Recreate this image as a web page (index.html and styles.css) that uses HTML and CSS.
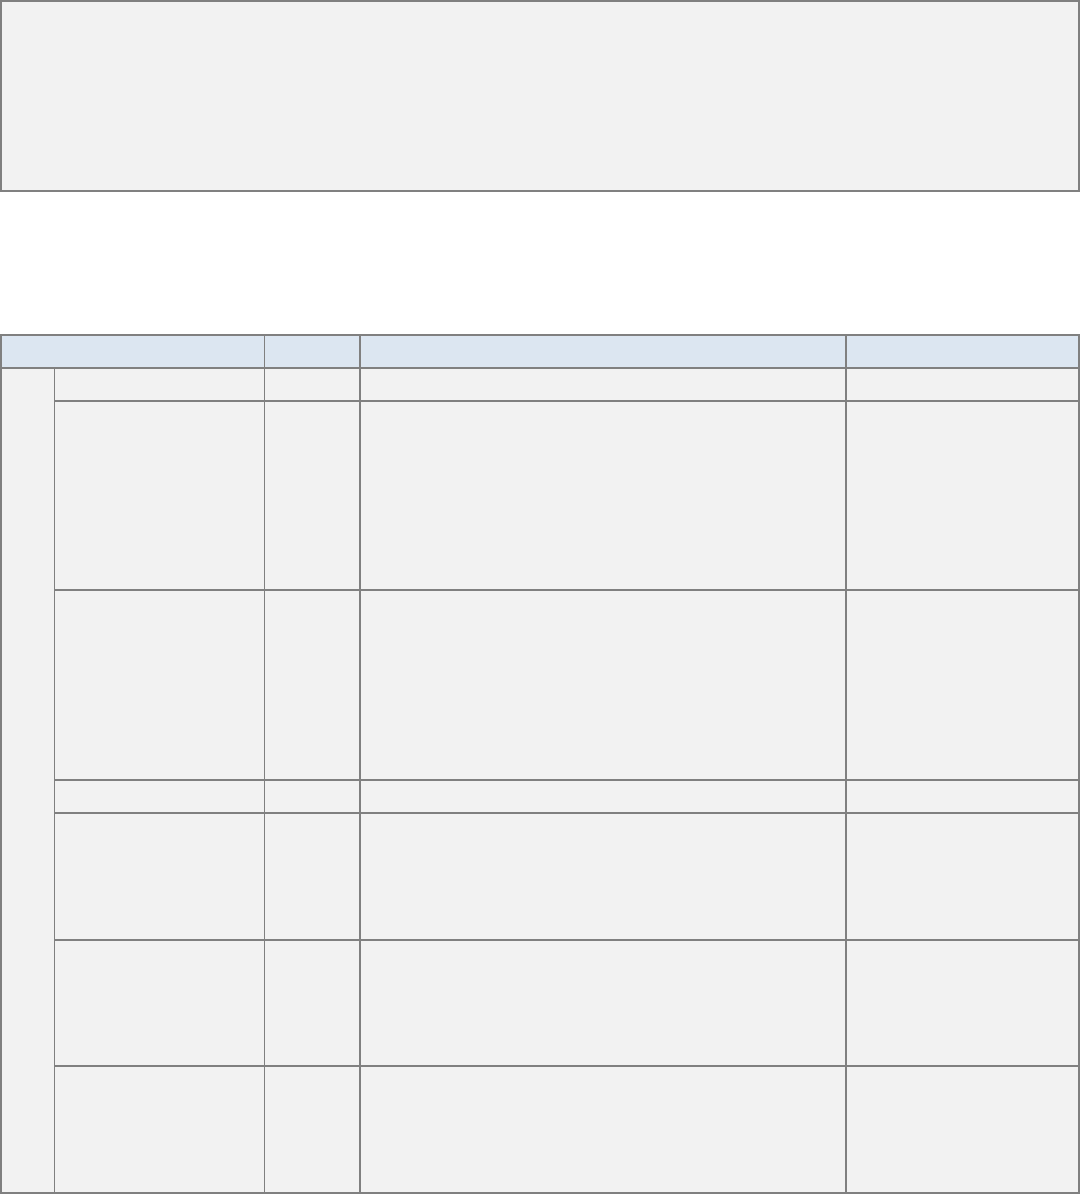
FILE: index.html
```html
<!DOCTYPE html>
<html lang="en">
<head>
<meta charset="utf-8">
<title>Sheet</title>
<link rel="stylesheet" href="styles.css">
</head>
<body>
<div class="page">
  <div class="note-box"></div>
  <div class="sheet">
    <div class="cell head span-ab b-r1 b-b"></div>
    <div class="cell head b-r2 b-b"></div>
    <div class="cell head b-r2 b-b"></div>
    <div class="cell head b-b"></div>

    <div class="cell group b-r1"></div>

    <div class="cell b-r1 b-b"></div><div class="cell b-r2 b-b"></div><div class="cell b-r2 b-b"></div><div class="cell b-b"></div>
    <div class="cell b-r1 b-b"></div><div class="cell b-r2 b-b"></div><div class="cell b-r2 b-b"></div><div class="cell b-b"></div>
    <div class="cell b-r1 b-b"></div><div class="cell b-r2 b-b"></div><div class="cell b-r2 b-b"></div><div class="cell b-b"></div>
    <div class="cell b-r1 b-b"></div><div class="cell b-r2 b-b"></div><div class="cell b-r2 b-b"></div><div class="cell b-b"></div>
    <div class="cell b-r1 b-b"></div><div class="cell b-r2 b-b"></div><div class="cell b-r2 b-b"></div><div class="cell b-b"></div>
    <div class="cell b-r1 b-b"></div><div class="cell b-r2 b-b"></div><div class="cell b-r2 b-b"></div><div class="cell b-b"></div>
    <div class="cell b-r1"></div><div class="cell b-r2"></div><div class="cell b-r2"></div><div class="cell"></div>
  </div>
</div>
</body>
</html>
```
FILE: styles.css
```css
* { box-sizing: border-box; }
html, body {
  margin: 0;
  padding: 0;
  background: #ffffff;
  font-family: "Liberation Sans", Arial, sans-serif;
}
.page {
  width: 1080px;
  display: flex;
  flex-direction: column;
  gap: 142px;
}
.note-box {
  height: 192px;
  border: 2px solid #808080;
  background: #f2f2f2;
}
.sheet {
  display: grid;
  grid-template-columns: 53px 210px 96px 486px 231px;
  grid-template-rows: 33px 33px 189px 190px 33px 127px 126px 125px;
  border: 2px solid #808080;
  background: #f2f2f2;
}
.cell {
  background: #f2f2f2;
}
.head {
  background: #dce6f1;
}
.span-ab {
  grid-column: 1 / span 2;
}
.group {
  grid-column: 1;
  grid-row: 2 / span 7;
}
.b-r1 { border-right: 1px solid #808080; }
.b-r2 { border-right: 2px solid #808080; }
.b-b { border-bottom: 2px solid #808080; }
```
